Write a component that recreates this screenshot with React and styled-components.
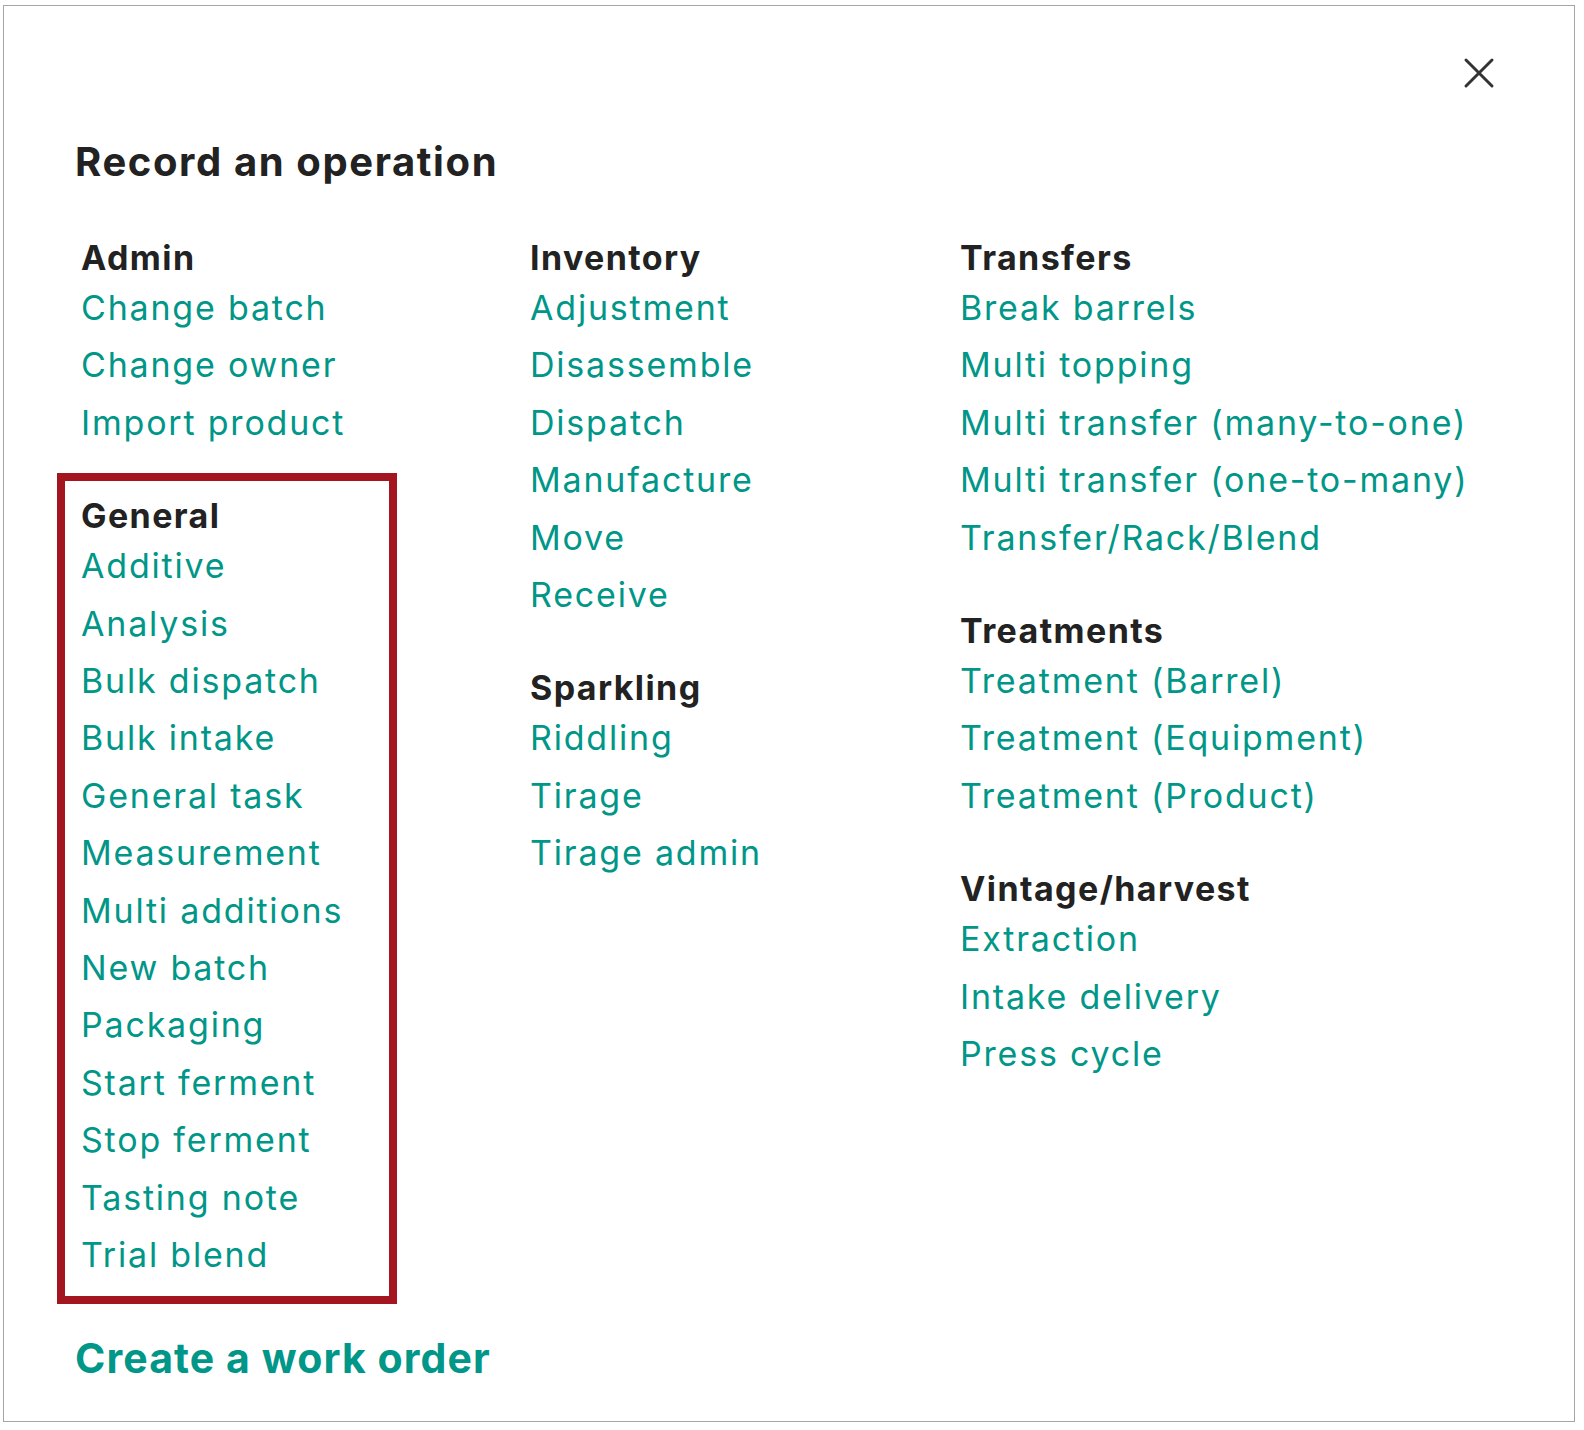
import styled, { createGlobalStyle } from 'styled-components';

const GlobalStyle = createGlobalStyle`
  body {
    margin: 0;
    background: #fff;
    font-family: Inter, "Liberation Sans", sans-serif;
    color: #222;
  }
`;

const Modal = styled.div`
  position: relative;
  box-sizing: border-box;
  margin: 5px 0 0 3px;
  width: 1572px;
  height: 1417px;
  border: 1px solid #a6a6a6;
  padding: 132px 0 0 71px;
`;

const CloseButton = styled.button`
  position: absolute;
  top: 45px;
  right: 73px;
  width: 44px;
  height: 44px;
  padding: 0;
  border: none;
  background: none;
  cursor: pointer;
  display: flex;
  align-items: center;
  justify-content: center;
`;

const Title = styled.h2`
  margin: 0;
  font-size: 40px;
  line-height: 48px;
  font-weight: 700;
  letter-spacing: 1.6px;
  color: #222;
`;

const Columns = styled.div`
  display: grid;
  grid-template-columns: 449px 430px 1fr;
  margin: 51px 0 0 6px;
`;

const Column = styled.div`
  display: flex;
  flex-direction: column;
  align-items: flex-start;
`;

const Section = styled.section`
  display: flex;
  flex-direction: column;
  align-items: flex-start;
  margin-top: 44px;
  &:first-child {
    margin-top: 0;
  }
`;

const HighlightSection = styled(Section)`
  box-sizing: border-box;
  width: 340px;
  margin: 22px 0 0 -24px;
  padding: 14px 16px 12px;
  border: 8px solid #a3161f;
`;

const Heading = styled.h3`
  margin: 0;
  font-size: 34px;
  line-height: 42px;
  font-weight: 700;
  letter-spacing: 1.4px;
  color: #222;
`;

const OpLink = styled.a`
  display: block;
  font-size: 34px;
  line-height: 57.4px;
  font-weight: 400;
  letter-spacing: 1.8px;
  color: #009688;
  text-decoration: none;
  cursor: pointer;
`;

const WorkOrder = styled.a`
  display: inline-block;
  margin-top: 29px;
  font-size: 41px;
  line-height: 50px;
  font-weight: 700;
  letter-spacing: 1.1px;
  color: #009688;
  text-decoration: none;
  cursor: pointer;
`;

const columns = [
  [
    { title: 'Admin', items: ['Change batch', 'Change owner', 'Import product'] },
    {
      title: 'General',
      highlight: true,
      items: [
        'Additive',
        'Analysis',
        'Bulk dispatch',
        'Bulk intake',
        'General task',
        'Measurement',
        'Multi additions',
        'New batch',
        'Packaging',
        'Start ferment',
        'Stop ferment',
        'Tasting note',
        'Trial blend',
      ],
    },
  ],
  [
    {
      title: 'Inventory',
      items: ['Adjustment', 'Disassemble', 'Dispatch', 'Manufacture', 'Move', 'Receive'],
    },
    { title: 'Sparkling', items: ['Riddling', 'Tirage', 'Tirage admin'] },
  ],
  [
    {
      title: 'Transfers',
      items: [
        'Break barrels',
        'Multi topping',
        'Multi transfer (many-to-one)',
        'Multi transfer (one-to-many)',
        'Transfer/Rack/Blend',
      ],
    },
    {
      title: 'Treatments',
      items: ['Treatment (Barrel)', 'Treatment (Equipment)', 'Treatment (Product)'],
    },
    { title: 'Vintage/harvest', items: ['Extraction', 'Intake delivery', 'Press cycle'] },
  ],
];

function CloseIcon() {
  return (
    <svg width="32" height="32" viewBox="0 0 32 32" fill="none">
      <path d="M3 3L29 29M29 3L3 29" stroke="#333" strokeWidth="3" strokeLinecap="round" />
    </svg>
  );
}

function App() {
  return (
    <Modal>
      <GlobalStyle />
      <CloseButton aria-label="Close">
        <CloseIcon />
      </CloseButton>
      <Title>Record an operation</Title>
      <Columns>
        {columns.map((sections, i) => (
          <Column key={i}>
            {sections.map((section) => {
              const Wrap = section.highlight ? HighlightSection : Section;
              return (
                <Wrap key={section.title}>
                  <Heading>{section.title}</Heading>
                  {section.items.map((item) => (
                    <OpLink key={item}>{item}</OpLink>
                  ))}
                </Wrap>
              );
            })}
          </Column>
        ))}
      </Columns>
      <WorkOrder>Create a work order</WorkOrder>
    </Modal>
  );
}

export default App;
